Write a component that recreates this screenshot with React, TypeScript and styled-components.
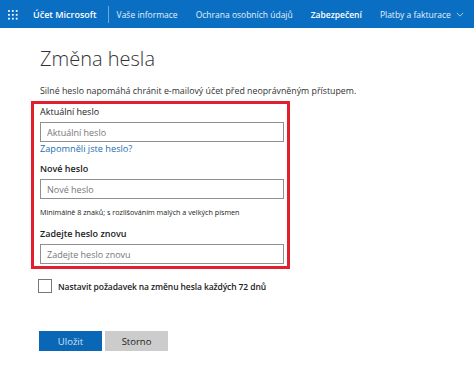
import styled, { createGlobalStyle } from 'styled-components';

type NavItem = { title: string; active?: boolean; menu?: boolean };

const navItems: NavItem[] = [
  { title: 'Vaše informace' },
  { title: 'Ochrana osobních údajů' },
  { title: 'Zabezpečení', active: true },
  { title: 'Platby a fakturace', menu: true },
];

type Field = { label: string; placeholder: string; after?: 'link' | 'hint' };

const fields: Field[] = [
  { label: 'Aktuální heslo', placeholder: 'Aktuální heslo', after: 'link' },
  { label: 'Nové heslo', placeholder: 'Nové heslo', after: 'hint' },
  { label: 'Zadejte heslo znovu', placeholder: 'Zadejte heslo znovu' },
];

export default function App() {
  return (
    <>
      <GlobalStyle />
      <Header>
        <Waffle viewBox="0 0 10 10">
          {[1, 4.5, 8].map((y) =>
            [1, 4.5, 8].map((x) => <rect key={`${x}-${y}`} x={x} y={y} width="1.6" height="1.6" fill="#fff" />),
          )}
        </Waffle>
        <Brand>Účet Microsoft</Brand>
        <Divider />
        <Nav>
          {navItems.map((item) => (
            <NavLink key={item.title} $active={item.active}>
              {item.title}
              {item.menu && (
                <Chevron viewBox="0 0 10 6">
                  <path d="M1 1l4 4 4-4" fill="none" stroke="#cfe3f5" strokeWidth="1" />
                </Chevron>
              )}
            </NavLink>
          ))}
        </Nav>
      </Header>

      <Main>
        <Title>Změna hesla</Title>
        <Intro>Silné heslo napomáhá chránit e-mailový účet před neoprávněným přístupem.</Intro>

        <Highlight>
          {fields.map((field, i) => (
            <FieldGroup key={field.label}>
              <Label $first={i === 0}>{field.label}</Label>
              <Input type="password" placeholder={field.placeholder} />
              {field.after === 'link' && <ForgotLink href="#">Zapomněli jste heslo?</ForgotLink>}
              {field.after === 'hint' && <Hint>Minimálně 8 znaků; s rozlišováním malých a velkých písmen</Hint>}
            </FieldGroup>
          ))}
        </Highlight>

        <CheckRow>
          <Box />
          <CheckLabel>Nastavit požadavek na změnu hesla každých 72 dnů</CheckLabel>
        </CheckRow>

        <Buttons>
          <Button $primary>Uložit</Button>
          <Button>Storno</Button>
        </Buttons>
      </Main>
    </>
  );
}

const GlobalStyle = createGlobalStyle`
  body {
    margin: 0;
    background: #fff;
    font-family: "Open Sans", "Noto Sans", "Liberation Sans", sans-serif;
    color: #262626;
  }
`;

const Header = styled.header`
  height: 28px;
  background: #0a6fc2;
  display: flex;
  align-items: center;
  padding-left: 7px;
  color: #fff;
  white-space: nowrap;
  overflow: hidden;
`;

const Waffle = styled.svg`
  flex-shrink: 0;
  width: 11px;
  height: 11px;
`;

const Brand = styled.span`
  flex-shrink: 0;
  margin-left: 15px;
  font-size: 9px;
  font-weight: 600;
`;

const Divider = styled.span`
  flex-shrink: 0;
  width: 1px;
  height: 17px;
  background: rgba(255, 255, 255, 0.4);
  margin-left: 11px;
`;

const Nav = styled.nav`
  display: flex;
  gap: 18px;
  margin-left: 8px;
`;

const NavLink = styled.span<{ $active?: boolean }>`
  flex-shrink: 0;
  display: flex;
  align-items: center;
  gap: 5px;
  font-size: 8.5px;
  font-weight: ${(p) => (p.$active ? 600 : 400)};
  color: ${(p) => (p.$active ? '#fff' : '#e4f0fa')};
`;

const Chevron = styled.svg`
  width: 8px;
  height: 5px;
`;

const Main = styled.main`
  padding-left: 40px;
`;

const Title = styled.h1`
  margin: 16px 0 0;
  font-size: 20px;
  font-weight: 300;
  line-height: 30px;
  color: #333;
`;

const Intro = styled.p`
  margin: 10px 0 0;
  font-size: 8.8px;
  line-height: 14px;
  color: #333;
`;

const Highlight = styled.section`
  margin: 3px 0 0 -9px;
  width: 247px;
  border: 3px solid #e0202e;
  padding: 2px 0 2px 6px;
  display: flex;
  flex-direction: column;
`;

const FieldGroup = styled.div`
  display: flex;
  flex-direction: column;
`;

const Label = styled.label<{ $first?: boolean }>`
  font-size: 9px;
  line-height: 12px;
  font-weight: ${(p) => (p.$first ? 400 : 600)};
  color: #222;
  padding: ${(p) => (p.$first ? 0 : 7)}px 0 4px;
`;

const Input = styled.input`
  box-sizing: border-box;
  width: 244px;
  height: 20px;
  border: 1.5px solid #8f8f8f;
  padding: 0 6px;
  font-family: inherit;
  font-size: 9px;
  outline: none;
  &::placeholder {
    color: #777;
  }
`;

const ForgotLink = styled.a`
  font-size: 9.2px;
  line-height: 14px;
  color: #1b6fb3;
  text-decoration: none;
`;

const Hint = styled.p`
  margin: 8px 0 3px;
  font-size: 7.2px;
  line-height: 11px;
  color: #222;
`;

const CheckRow = styled.label`
  display: flex;
  align-items: center;
  gap: 6px;
  margin: 10px 0 0 -2px;
`;

const Box = styled.span`
  box-sizing: border-box;
  width: 14px;
  height: 14px;
  border: 1.5px solid #777;
  background: #fff;
`;

const CheckLabel = styled.span`
  font-size: 8.5px;
  font-weight: 600;
  letter-spacing: -0.1px;
  color: #222;
`;

const Buttons = styled.div`
  display: flex;
  gap: 3px;
  margin: 38px 0 0 -1px;
`;

const Button = styled.button<{ $primary?: boolean }>`
  width: 63px;
  height: 20px;
  border: none;
  font-family: inherit;
  font-size: 9.5px;
  background: ${(p) => (p.$primary ? '#0a67b5' : '#cccccc')};
  color: ${(p) => (p.$primary ? '#cfe2f3' : '#222')};
`;
